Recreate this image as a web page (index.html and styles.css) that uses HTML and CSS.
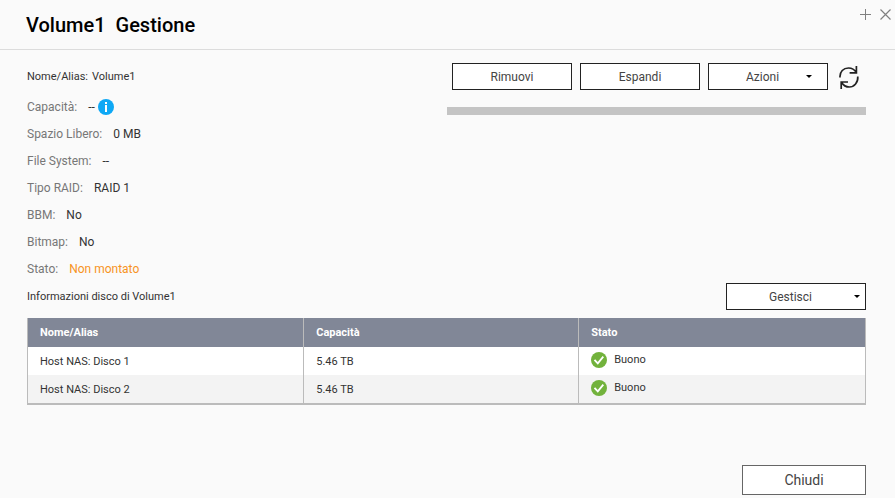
FILE: index.html
```html
<!DOCTYPE html>
<html lang="it">
<head>
<meta charset="utf-8">
<meta name="viewport" content="width=device-width, initial-scale=1">
<title>Volume1 Gestione</title>
<link rel="stylesheet" href="styles.css">
</head>
<body>
<header class="titlebar">
  <h1 class="title"><span>Volume1</span><span>Gestione</span></h1>
  <div class="window-tools">
    <button class="icon-btn" type="button" aria-label="Ingrandisci">
      <svg width="11" height="11" viewBox="0 0 11 11" fill="none" stroke="#808080"><path d="M5.5 0v11M0 5.5h11"/></svg>
    </button>
    <button class="icon-btn" type="button" aria-label="Chiudi finestra">
      <svg width="11" height="11" viewBox="0 0 11 11" fill="none" stroke="#808080" stroke-width="1.2"><path d="M.5.5l10 10M10.5.5l-10 10"/></svg>
    </button>
  </div>
</header>

<main class="content">
  <section class="overview">
    <dl class="details">
      <div class="row row-name"><dt>Nome/Alias:</dt><dd>Volume1</dd></div>
      <div class="row"><dt>Capacità:</dt><dd class="capacity">--
        <svg width="16" height="16" viewBox="0 0 16 16" role="img" aria-label="Informazioni"><circle cx="8" cy="8" r="8" fill="#0ea8f5"/><path d="M7 3h2v2H7zM7 6h2v7H7z" fill="#fff"/></svg></dd></div>
      <div class="row"><dt>Spazio Libero:</dt><dd>0 MB</dd></div>
      <div class="row"><dt>File System:</dt><dd>--</dd></div>
      <div class="row"><dt>Tipo RAID:</dt><dd>RAID 1</dd></div>
      <div class="row"><dt>BBM:</dt><dd>No</dd></div>
      <div class="row"><dt>Bitmap:</dt><dd>No</dd></div>
      <div class="row"><dt>Stato:</dt><dd class="warn">Non montato</dd></div>
    </dl>
    <div class="side">
      <div class="actions">
        <button class="btn" type="button">Rimuovi</button>
        <button class="btn" type="button">Espandi</button>
        <button class="btn menu-btn menu-btn-inset" type="button" aria-haspopup="menu"><span class="label">Azioni</span><span class="caret"></span></button>
        <button class="icon-btn refresh" type="button" aria-label="Aggiorna">
          <svg width="20" height="24" viewBox="0 0 20 24" fill="none" stroke="#222" stroke-width="1.7"><path d="M1 12.5C.6 6.500 4.500 3 9.500 3c3.500 0 6 1.600 7.800 4.600M17.400 1v6.800h-6.800"/><path d="M18.800 11.500C19.200 17.500 15.300 22 10.300 22c-3.500 0-6-1.800-7.800-4.800M2.200 24v-7h6.800"/></svg>
        </button>
      </div>
      <div class="usage" role="progressbar" aria-label="Spazio utilizzato" aria-valuenow="0"></div>
    </div>
  </section>

  <section class="disks">
    <div class="disks-head">
      <h2 class="subtitle">Informazioni disco di Volume1</h2>
      <button class="btn btn-wide menu-btn" type="button" aria-haspopup="menu"><span class="label">Gestisci</span><span class="caret"></span></button>
    </div>
    <table class="grid">
      <thead><tr><th scope="col">Nome/Alias</th><th scope="col">Capacità</th><th scope="col">Stato</th></tr></thead>
      <tbody>
        <tr><td>Host NAS: Disco 1</td><td>5.46 TB</td><td><span class="status"><svg width="16" height="16" viewBox="0 0 16 16" aria-hidden="true"><circle cx="8" cy="8" r="8" fill="#72b23c"/><path d="M3.5 7.8l3.300 3.600 5.500-6.800" fill="none" stroke="#fff" stroke-width="1.8"/></svg>Buono</span></td></tr>
        <tr><td>Host NAS: Disco 2</td><td>5.46 TB</td><td><span class="status"><svg width="16" height="16" viewBox="0 0 16 16" aria-hidden="true"><circle cx="8" cy="8" r="8" fill="#72b23c"/><path d="M3.5 7.8l3.300 3.600 5.500-6.800" fill="none" stroke="#fff" stroke-width="1.8"/></svg>Buono</span></td></tr>
      </tbody>
    </table>
  </section>
</main>

<footer class="footer">
  <button class="btn btn-close" type="button">Chiudi</button>
</footer>
</body>
</html>
```
FILE: styles.css
```css
* {
  box-sizing: border-box;
}

body {
  display: flex;
  flex-direction: column;
  min-height: 100vh;
  margin: 0;
  background: #fafafa;
  color: #333;
  font: 12px/16px Roboto, sans-serif;
}

h1, h2, dl, dd {
  margin: 0;
}

button {
  font: inherit;
  color: inherit;
  cursor: pointer;
}

svg {
  display: block;
  flex: none;
}

.titlebar {
  display: flex;
  justify-content: space-between;
  align-items: flex-start;
  padding: 9px 4px 8px 26px;
  border-bottom: 1px solid #dcdcdc;
}

.title {
  display: flex;
  gap: 10px;
  color: #000;
  font-size: 20px;
  font-weight: 500;
  line-height: 32px;
}

.window-tools {
  display: flex;
  gap: 9px;
}

.icon-btn {
  padding: 0;
  border: 0;
  background: none;
}

.content {
  flex: 1;
  padding: 13px 29px 0 27px;
}

.overview {
  display: flex;
  justify-content: space-between;
}

.row {
  display: flex;
  align-items: center;
  gap: 11px;
  height: 27px;
}

.row dt {
  color: #777;
}

.row-name {
  gap: 4px;
  margin-bottom: 3px;
  font-size: 11px;
}

.row-name dt {
  color: #333;
}

.capacity {
  display: flex;
  gap: 3px;
}

.row .warn {
  color: #f7931e;
}

.side {
  width: 50%;
}

.actions {
  display: flex;
  align-items: center;
  justify-content: flex-end;
  gap: 8px;
  padding-right: 7px;
}

.refresh {
  margin-left: 3px;
}

.btn {
  width: 120px;
  height: 27px;
  padding: 0;
  border: 1px solid #222;
  background: #fff;
  color: #444;
}

.btn-wide {
  width: 140px;
}

.menu-btn {
  display: flex;
  align-items: center;
  padding-right: 5px;
}

.menu-btn-inset {
  padding: 0 15px 0 10px;
}

.label {
  flex: 1;
}

.caret {
  border: 3px solid transparent;
  border-top-color: #000;
  border-bottom: 0;
}

.usage {
  height: 8px;
  margin-top: 17px;
  background: #c4c4c4;
}

.disks-head {
  display: flex;
  align-items: center;
  justify-content: space-between;
  margin: 1px 0 8px;
}

.subtitle {
  font-size: 11px;
  font-weight: 400;
}

.grid {
  width: 100%;
  border: 1px solid #bbb;
  border-top: 0;
  border-bottom-width: 2px;
  border-spacing: 0;
  table-layout: fixed;
  background: #fff;
  font-size: 11px;
}

.grid th,
.grid td {
  height: 28px;
  padding: 1px 12px 0;
  border-right: 1px solid #bbb;
  text-align: left;
}

.grid th {
  width: 33%;
  height: 29px;
  background: #818797;
  color: #fff;
  font-weight: 700;
}

.grid th:nth-child(2) {
  width: 275px;
}

.grid th:last-child,
.grid td:last-child {
  width: auto;
  border-right: 0;
}

.grid td:last-child {
  padding: 0 12px 3px;
}

.grid tbody tr:nth-child(even) {
  background: #f3f3f3;
}

.status {
  display: flex;
  align-items: center;
  gap: 7px;
  line-height: 18px;
}

.footer {
  display: flex;
  justify-content: flex-end;
  padding: 0 29px 3px;
}

.btn-close {
  width: 124px;
  height: 30px;
  border-color: #666;
  font-size: 14px;
}
```
